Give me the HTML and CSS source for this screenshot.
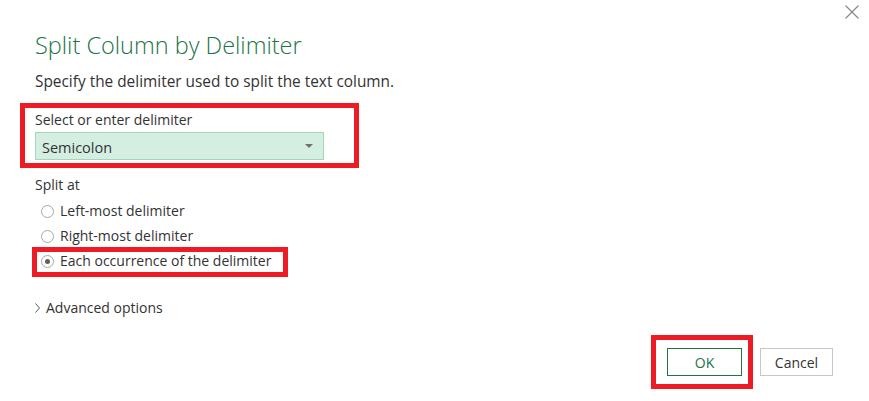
FILE: index.html
```html
<!DOCTYPE html>
<html>
<head>
<meta charset="utf-8">
<link rel="stylesheet" href="styles.css">
</head>
<body>
<div class="dialog">
  <button class="close" aria-label="Close">
    <svg width="14" height="14" viewBox="0 0 14 14"><path d="M0.5 0.5 L13.5 13.5 M13.5 0.5 L0.5 13.5" stroke="#8a8a8a" stroke-width="1.2" fill="none"/></svg>
  </button>
  <h1 class="title">Split Column by Delimiter</h1>
  <p class="desc">Specify the delimiter used to split the text column.</p>

  <div class="group hl hl-select">
    <div class="label">Select or enter delimiter</div>
    <div class="dropdown">
      <span>Semicolon</span>
      <svg class="caret" width="8" height="4" viewBox="0 0 8 4"><path d="M0 0 H8 L4 4 Z" fill="#707070"/></svg>
    </div>
  </div>

  <div class="label split">Split at</div>
  <div class="radios">
    <label class="radio"><span class="dot"></span>Left-most delimiter</label>
    <label class="radio"><span class="dot"></span>Right-most delimiter</label>
    <label class="radio checked hl hl-radio"><span class="dot"></span>Each occurrence of the delimiter</label>
  </div>

  <div class="advanced">
    <svg class="chev" width="5" height="10" viewBox="0 0 5 10"><path d="M0.5 0.5 L4.5 5 L0.5 9.5" stroke="#555" stroke-width="1" fill="none"/></svg>
    <span>Advanced options</span>
  </div>

  <div class="footer">
    <button class="btn ok hl hl-ok">OK</button>
    <button class="btn cancel">Cancel</button>
  </div>
</div>
</body>
</html>
```

FILE: styles.css
```css
html, body {
  margin: 0;
  padding: 0;
  background: #ffffff;
}
body {
  font-family: "Open Sans", "Noto Sans", sans-serif;
  font-size: 14px;
  color: #333333;
}
.dialog {
  position: relative;
  width: 869px;
  height: 401px;
  padding-left: 35px;
  box-sizing: border-box;
}
.close {
  position: absolute;
  top: 5px;
  right: 10px;
  width: 14px;
  height: 14px;
  padding: 0;
  border: none;
  background: none;
  display: block;
}
.close svg { display: block; }
.title {
  margin: 0;
  padding-top: 29px;
  font-size: 23.5px;
  line-height: 32px;
  font-weight: 300;
  color: #217346;
}
.desc {
  margin: 11px 0 0 0;
  font-size: 15.4px;
  line-height: 20px;
}
.label {
  line-height: 20px;
}
.group {
  position: relative;
  width: 289px;
  margin-top: 18px;
}
.dropdown {
  margin-top: 2px;
  height: 28px;
  box-sizing: border-box;
  background: #d4efe1;
  border: 1px solid #a3d7bb;
  display: flex;
  align-items: center;
  justify-content: space-between;
  padding: 0 10px 0 6px;
  font-size: 14.5px;
}
.dropdown span { position: relative; top: 1px; }
.caret { display: block; }
.split {
  margin-top: 15px;
}
.radios {
  margin-top: 6px;
  display: flex;
  flex-direction: column;
  align-items: flex-start;
  gap: 5px;
}
.radio {
  position: relative;
  display: flex;
  align-items: center;
  line-height: 20px;
  white-space: nowrap;
}
.dot {
  width: 11px;
  height: 11px;
  border: 1px solid #a8a8a8;
  border-radius: 50%;
  margin: 0 6px 0 6px;
  box-sizing: content-box;
  position: relative;
}
.checked .dot::after {
  content: "";
  position: absolute;
  left: 3px;
  top: 3px;
  width: 5px;
  height: 5px;
  border-radius: 50%;
  background: #606060;
}
.advanced {
  margin-top: 27px;
  display: flex;
  align-items: center;
  gap: 6px;
  line-height: 20px;
}
.chev { display: block; }
.footer {
  display: flex;
  justify-content: flex-end;
  gap: 18px;
  padding-right: 36px;
  margin-top: 30px;
}
.btn {
  height: 28px;
  box-sizing: border-box;
  font-family: inherit;
  font-size: 14px;
  background: #ffffff;
  padding: 0;
}
.ok {
  position: relative;
  width: 75px;
  border: 1px solid #217346;
  color: #217346;
}
.cancel {
  width: 73px;
  border: 1px solid #c6c6c6;
  color: #333333;
}
.hl::after {
  content: "";
  position: absolute;
  border: 5px solid #ed1c24;
  pointer-events: none;
}
.hl-select::after {
  left: -15px;
  right: -35px;
  top: -7px;
  bottom: -8px;
}
.hl-radio::after {
  left: -3px;
  right: -17px;
  top: -4px;
  bottom: -6px;
}
.hl-ok::after {
  left: -17px;
  right: -12px;
  top: -14px;
  bottom: -14px;
}
```
